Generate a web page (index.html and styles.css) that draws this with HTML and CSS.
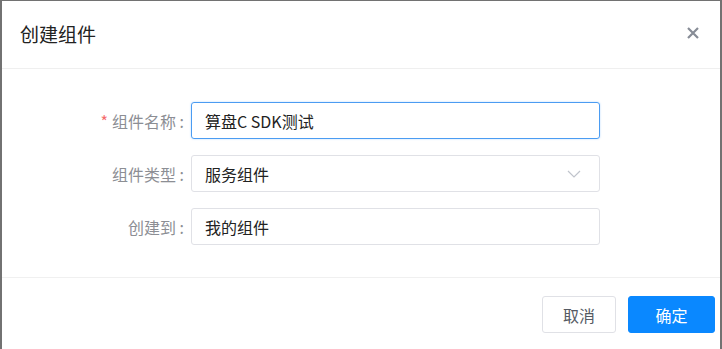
FILE: index.html
```html
<!DOCTYPE html>
<html lang="zh-CN">
<head>
    <meta charset="UTF-8">
    <title>创建组件</title>
    <link rel="stylesheet" href="styles.css">
</head>
<body>
    <div class="dialog">
        <div class="dialog-header">
            <span class="dialog-title">创建组件</span>
            <svg class="dialog-close" width="12" height="12" viewBox="0 0 12 12">
                <path d="M1 1 L11 11 M11 1 L1 11" stroke="#878c96" stroke-width="2.2"/>
            </svg>
        </div>

        <div class="dialog-body">
            <div class="form-item">
                <label class="form-label"><span class="required">*</span>组件名称 :</label>
                <div class="input is-focus">算盘C SDK测试</div>
            </div>
            <div class="form-item">
                <label class="form-label">组件类型 :</label>
                <div class="input select">
                    <span>服务组件</span>
                    <svg class="arrow" width="14" height="8" viewBox="0 0 14 8">
                        <path d="M1 1 L7 7 L13 1" fill="none" stroke="#c0c4cc" stroke-width="1.2"/>
                    </svg>
                </div>
            </div>
            <div class="form-item">
                <label class="form-label">创建到 :</label>
                <div class="input">我的组件</div>
            </div>
        </div>

        <div class="dialog-footer">
            <button class="btn">取消</button>
            <button class="btn btn-primary">确定</button>
        </div>
    </div>
</body>
</html>
```

FILE: styles.css
```css
* {
    margin: 0;
    padding: 0;
    box-sizing: border-box;
}

body {
    background: #727272;
    font-family: "Noto Sans CJK SC", "Liberation Sans", sans-serif;
    height: 349px;
    overflow: hidden;
    padding: 1px 2px 0 2px;
}

.dialog {
    background: #fff;
    height: 348px;
}

.dialog-header {
    height: 68px;
    display: flex;
    align-items: center;
    justify-content: space-between;
    padding: 0 21px 2px 18px;
    border-bottom: 1px solid #efefef;
}

.dialog-title {
    font-size: 19px;
    color: #222;
}

.dialog-close {
    margin-top: -2px;
}

.dialog-body {
    padding: 33px 0 32px 0;
    border-bottom: 1px solid #f0f0f0;
}

.form-item {
    display: flex;
    align-items: center;
    margin-bottom: 16px;
}

.form-item:last-child {
    margin-bottom: 0;
}

.form-label {
    width: 189px;
    padding-right: 7px;
    text-align: right;
    font-size: 16px;
    color: #8c8e94;
}

.required {
    color: #f56c6c;
    margin-right: 4px;
}

.input {
    width: 409px;
    height: 37px;
    border: 1px solid #e0e1e6;
    border-radius: 3px;
    padding: 0 12px 0 13px;
    display: flex;
    align-items: center;
    font-size: 16px;
    color: #222;
}

.input.is-focus {
    border-color: #4b9cf2;
    box-shadow: 0 0 2px rgba(64, 158, 255, 0.4);
}

.select {
    justify-content: space-between;
}

.arrow {
    margin-right: 6px;
}

.dialog-footer {
    display: flex;
    justify-content: flex-end;
    padding: 18px 5px 0 0;
    gap: 12px;
}

.btn {
    width: 74px;
    height: 37px;
    border: 1px solid #e0e1e6;
    border-radius: 3px;
    background: #fff;
    color: #555a63;
    font-family: inherit;
    font-size: 16px;
}

.btn-primary {
    width: 87px;
    background: #0a88ff;
    border-color: #0a88ff;
    color: #fff;
}
```
